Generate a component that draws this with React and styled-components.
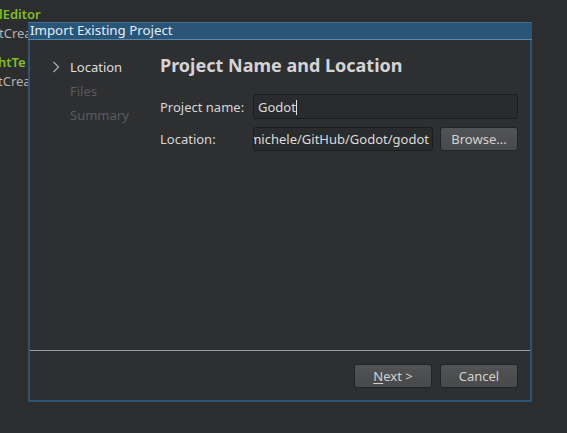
import styled, { createGlobalStyle } from "styled-components";

const Global = createGlobalStyle`
    html, body {
        margin: 0;
        padding: 0;
        background: #2c2d2f;
        font-family: "Noto Sans", "Open Sans", sans-serif;
        font-size: 13px;
        overflow: hidden;
    }
`

const Desktop = styled.div`
    position: relative;
    width: 567px;
    height: 433px;
    background: #2c2d2f;
`

const BackList = styled.div`
    display: flex;
    flex-direction: column;
    padding-top: 5px;
`

const BackItem = styled.div`
    display: flex;
    flex-direction: column;
    margin-bottom: 10px;
    margin-left: ${p => p.$shift}px;
`

const BackTitle = styled.span`
    color: #7fbd2b;
    font-size: 13px;
    font-weight: 600;
    line-height: 18px;
`

const BackSub = styled.span`
    color: #b3b3b3;
    font-size: 13px;
    line-height: 20px;
`

const Window = styled.div`
    position: absolute;
    left: 28px;
    top: 22px;
    width: 504px;
    height: 380px;
    display: flex;
    flex-direction: column;
`

const TitleBar = styled.div`
    height: 16px;
    background: #285578;
    border-top: 1px solid #3f6e91;
    border-bottom: 1px solid #5d87a6;
    color: #e6edf2;
    font-size: 13.3px;
    line-height: 15px;
    padding-left: 2px;
`

const Body = styled.div`
    flex: 1;
    display: flex;
    flex-direction: column;
    background: #2e2f31;
    border: 2px solid #285578;
    border-top: none;
`

const Main = styled.div`
    flex: 1;
    display: flex;
    min-width: 0;
`

const Nav = styled.div`
    width: 130px;
    flex-shrink: 0;
    box-sizing: border-box;
    display: flex;
    flex-direction: column;
    padding: 18px 0 0 22px;
    gap: 6px;
`

const NavItem = styled.div`
    display: flex;
    align-items: center;
    height: 18px;
    color: ${p => p.$active ? "#dedede" : "#5a5b5d"};
    font-size: 13px;
`

const Chevron = styled.svg`
    width: 18px;
    height: 18px;
    visibility: ${p => p.$show ? "visible" : "hidden"};
`

const Page = styled.div`
    flex: 1;
    min-width: 0;
    display: flex;
    flex-direction: column;
    padding: 13px 12px 0 0;
`

const Heading = styled.h1`
    margin: 0 0 17px 0;
    color: #d4d4d4;
    font-size: 18px;
    font-weight: 700;
    line-height: 24px;
`

const Row = styled.div`
    display: flex;
    align-items: center;
    gap: 7px;
    margin-bottom: 8px;
`

const Label = styled.span`
    width: 86px;
    flex-shrink: 0;
    color: #d6d6d6;
    font-size: 13px;
    white-space: nowrap;
`

const Field = styled.div`
    flex: 1;
    min-width: 0;
    height: ${p => p.$h}px;
    box-sizing: border-box;
    display: flex;
    align-items: center;
    justify-content: ${p => p.$end ? "flex-end" : "flex-start"};
    background: #2a2b2d;
    border: 1px solid #1c1c1d;
    border-radius: 3px;
    color: #dcdcdc;
    font-size: 13px;
    padding: 0 ${p => p.$end ? 3 : 0}px 0 ${p => p.$end ? 0 : 4}px;
    overflow: hidden;
    white-space: nowrap;
`

const FieldText = styled.span`
    flex-shrink: 0;
`

const Caret = styled.span`
    display: inline-block;
    width: 1px;
    height: 15px;
    background: #e0e0e0;
    vertical-align: -3px;
`

const Button = styled.div`
    width: 78px;
    height: 24px;
    flex-shrink: 0;
    box-sizing: border-box;
    display: flex;
    align-items: center;
    justify-content: center;
    background: linear-gradient(#525355, #48494b);
    border: 1px solid #222324;
    border-radius: 3px;
    color: #d2d2d2;
    font-size: 13px;
`

const Divider = styled.div`
    height: 1px;
    background: #9c9c9c;
`

const Footer = styled.div`
    height: 49px;
    display: flex;
    justify-content: flex-end;
    align-items: center;
    gap: 8px;
    padding-right: 12px;
`

const Underline = styled.span`
    text-decoration: underline;
    text-underline-offset: 2px;
`

const steps = ["Location", "Files", "Summary"]

const App = () => {
    return (
        <>
            <Global />
            <Desktop>
                <BackList>
                    <BackItem $shift={-1}>
                        <BackTitle>lEditor</BackTitle>
                        <BackSub>tCrea</BackSub>
                    </BackItem>
                    <BackItem $shift={-2}>
                        <BackTitle>htTe</BackTitle>
                        <BackSub>tCrea</BackSub>
                    </BackItem>
                </BackList>

                <Window>
                    <TitleBar>Import Existing Project</TitleBar>
                    <Body>
                        <Main>
                            <Nav>
                                {steps.map((s, i) => (
                                    <NavItem key={s} $active={i === 0}>
                                        <Chevron $show={i === 0} viewBox="0 0 18 18">
                                            <path d="M1.5 4 L6.5 9 L1.5 14" fill="none" stroke="#a9a9a9" strokeWidth="1.3" />
                                        </Chevron>
                                        {s}
                                    </NavItem>
                                ))}
                            </Nav>
                            <Page>
                                <Heading>Project Name and Location</Heading>
                                <Row>
                                    <Label>Project name:</Label>
                                    <Field $h={25}><FieldText>Godot<Caret /></FieldText></Field>
                                </Row>
                                <Row>
                                    <Label>Location:</Label>
                                    <Field $h={24} $end><FieldText>michele/GitHub/Godot/godot</FieldText></Field>
                                    <Button>Browse...</Button>
                                </Row>
                            </Page>
                        </Main>
                        <Divider />
                        <Footer>
                            <Button><Underline>N</Underline>ext &gt;</Button>
                            <Button>Cancel</Button>
                        </Footer>
                    </Body>
                </Window>
            </Desktop>
        </>
    );
}

export default App;
